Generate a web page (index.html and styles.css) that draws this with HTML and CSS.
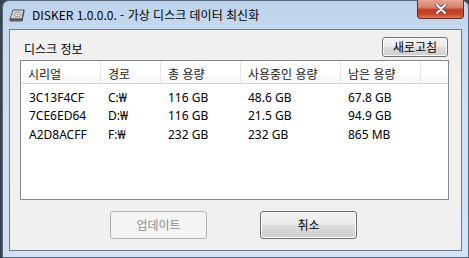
FILE: index.html
```html
<!DOCTYPE html>
<html lang="ko">
<head>
  <meta charset="UTF-8">
  <title>DISKER</title>
  <link rel="stylesheet" href="styles.css">
</head>
<body>
  <div class="window">
    <div class="titlebar">
      <svg class="app-icon" width="18" height="16" viewBox="0 0 18 16">
        <path d="M4 3 L15 3 L13 12 L1 12 Z" fill="#d8d8d8" stroke="#555" stroke-width="1"/>
        <path d="M1 12 L13 12 L13 14 L1 14 Z" fill="#6b6b6b" stroke="#444" stroke-width="0.8"/>
        <path d="M13 12 L15 3 L15 5 L13 14 Z" fill="#888" stroke="#444" stroke-width="0.6"/>
        <ellipse cx="8.5" cy="7.5" rx="3.2" ry="2.2" fill="#eee" stroke="#777" stroke-width="0.8"/>
        <circle cx="8.5" cy="7.5" r="0.8" fill="#666"/>
      </svg>
      <span class="title">DISKER 1.0.0.0. - 가상 디스크 데이터 최신화</span>
      <div class="close">
        <svg width="14" height="10" viewBox="0 0 14 10">
          <path d="M3 1 L11 9 M11 1 L3 9" stroke="#4a4a4a" stroke-width="3.4" stroke-linecap="round"/>
          <path d="M3 1 L11 9 M11 1 L3 9" stroke="#fff" stroke-width="2" stroke-linecap="round"/>
        </svg>
      </div>
    </div>

    <div class="client">
      <div class="group-head">
        <span class="group-label">디스크 정보</span>
        <button class="btn btn-small">새로고침</button>
      </div>

      <div class="list">
        <div class="list-head">
          <div class="col">시리얼</div>
          <div class="col">경로</div>
          <div class="col">총 용량</div>
          <div class="col">사용중인 용량</div>
          <div class="col">남은 용량</div>
          <div class="col last"></div>
        </div>
        <div class="rows">
          <div class="row">
            <div class="cell first">3C13F4CF</div>
            <div class="cell">C:₩</div>
            <div class="cell">116 GB</div>
            <div class="cell">48.6 GB</div>
            <div class="cell">67.8 GB</div>
          </div>
          <div class="row">
            <div class="cell first">7CE6ED64</div>
            <div class="cell">D:₩</div>
            <div class="cell">116 GB</div>
            <div class="cell">21.5 GB</div>
            <div class="cell">94.9 GB</div>
          </div>
          <div class="row">
            <div class="cell first">A2D8ACFF</div>
            <div class="cell">F:₩</div>
            <div class="cell">232 GB</div>
            <div class="cell">232 GB</div>
            <div class="cell">865 MB</div>
          </div>
        </div>
      </div>

      <div class="actions">
        <button class="btn btn-big" disabled>업데이트</button>
        <button class="btn btn-big">취소</button>
      </div>
    </div>
  </div>
</body>
</html>
```

FILE: styles.css
```css
html, body {
  margin: 0;
  padding: 0;
  width: 469px;
  height: 258px;
  overflow: hidden;
  background: #3a4350;
}
body {
  font-family: "Noto Sans", "Noto Sans CJK KR", sans-serif;
  font-size: 12px;
  color: #000;
}
.window {
  box-sizing: border-box;
  width: 467px;
  height: 258px;
  margin-left: 2px;
  display: flex;
  flex-direction: column;
  padding: 0 6px 6px 6px;
  border: 1px solid #58697d;
  border-radius: 7px 7px 0 0;
  background: linear-gradient(180deg, #bcd3ec 0%, #c6daf0 12%, #cddff3 40%, #d3e3f5 100%);
}
.titlebar {
  position: relative;
  height: 28px;
  display: flex;
  align-items: center;
  gap: 5px;
}
.app-icon {
  flex: none;
}
.title {
  font-family: "Noto Sans CJK KR", sans-serif;
  font-size: 12px;
  color: #000;
  line-height: 1;
  margin-top: -1px;
}
.close {
  position: absolute;
  top: -1px;
  right: -2px;
  width: 47px;
  height: 19px;
  box-sizing: border-box;
  border: 1px solid #6b2a22;
  border-top: none;
  border-radius: 0 0 4px 4px;
  background: linear-gradient(180deg, #e8a493 0%, #d9826c 40%, #c23b21 55%, #c64a2e 80%, #e07a5a 100%);
  display: flex;
  align-items: center;
  justify-content: center;
}
.client {
  flex: 1;
  display: flex;
  flex-direction: column;
  background: #f0f0f0;
  border: 1px solid #6d7a89;
  padding: 7px 12px 11px 10px;
}
.group-head {
  display: flex;
  align-items: center;
  justify-content: space-between;
  height: 20px;
}
.group-label {
  font-family: "Noto Sans CJK KR", sans-serif;
  padding-left: 4px;
  margin-top: 2px;
}
.btn {
  font-family: "Noto Sans CJK KR", sans-serif;
  font-size: 12px;
  color: #000;
  border: 1px solid #707070;
  border-radius: 3px;
  background: linear-gradient(180deg, #f2f2f2 0%, #ebebeb 49%, #dddddd 50%, #cfcfcf 100%);
  box-shadow: inset 0 0 0 1px #fcfcfc;
  padding: 0;
  line-height: 1;
}
.btn:disabled {
  color: #8d8d8d;
  border-color: #adb2b5;
  background: #f4f4f4;
  box-shadow: none;
}
.btn-small {
  width: 66px;
  height: 20px;
  margin-right: 1px;
}
.btn-big {
  width: 97px;
  height: 28px;
}
.list {
  margin-top: 3px;
  height: 140px;
  box-sizing: border-box;
  background: #fff;
  border: 1px solid #828790;
}
.list-head, .row {
  display: grid;
  grid-template-columns: 80px 60px 80px 100px 80px 1fr;
}
.list-head {
  height: 23px;
  background: linear-gradient(180deg, #ffffff 0%, #ffffff 50%, #f6f7f8 100%);
  border-bottom: 1px solid #d5d5d5;
  box-sizing: border-box;
}
.col {
  font-family: "Noto Sans CJK KR", sans-serif;
  padding: 3px 0 0 7px;
  display: flex;
  align-items: center;
  border-right: 1px solid #e3e5e8;
  color: #1a1a1a;
}
.col.last {
  border-right: none;
}
.rows {
  padding-top: 4px;
}
.row {
  height: 18.5px;
}
.cell {
  padding-left: 7px;
  display: flex;
  align-items: center;
  white-space: nowrap;
  color: #000;
}
.cell.first {
  padding-left: 8px;
}
.actions {
  margin-top: auto;
  display: flex;
  justify-content: center;
  gap: 53px;
  padding-right: 2px;
}
```
